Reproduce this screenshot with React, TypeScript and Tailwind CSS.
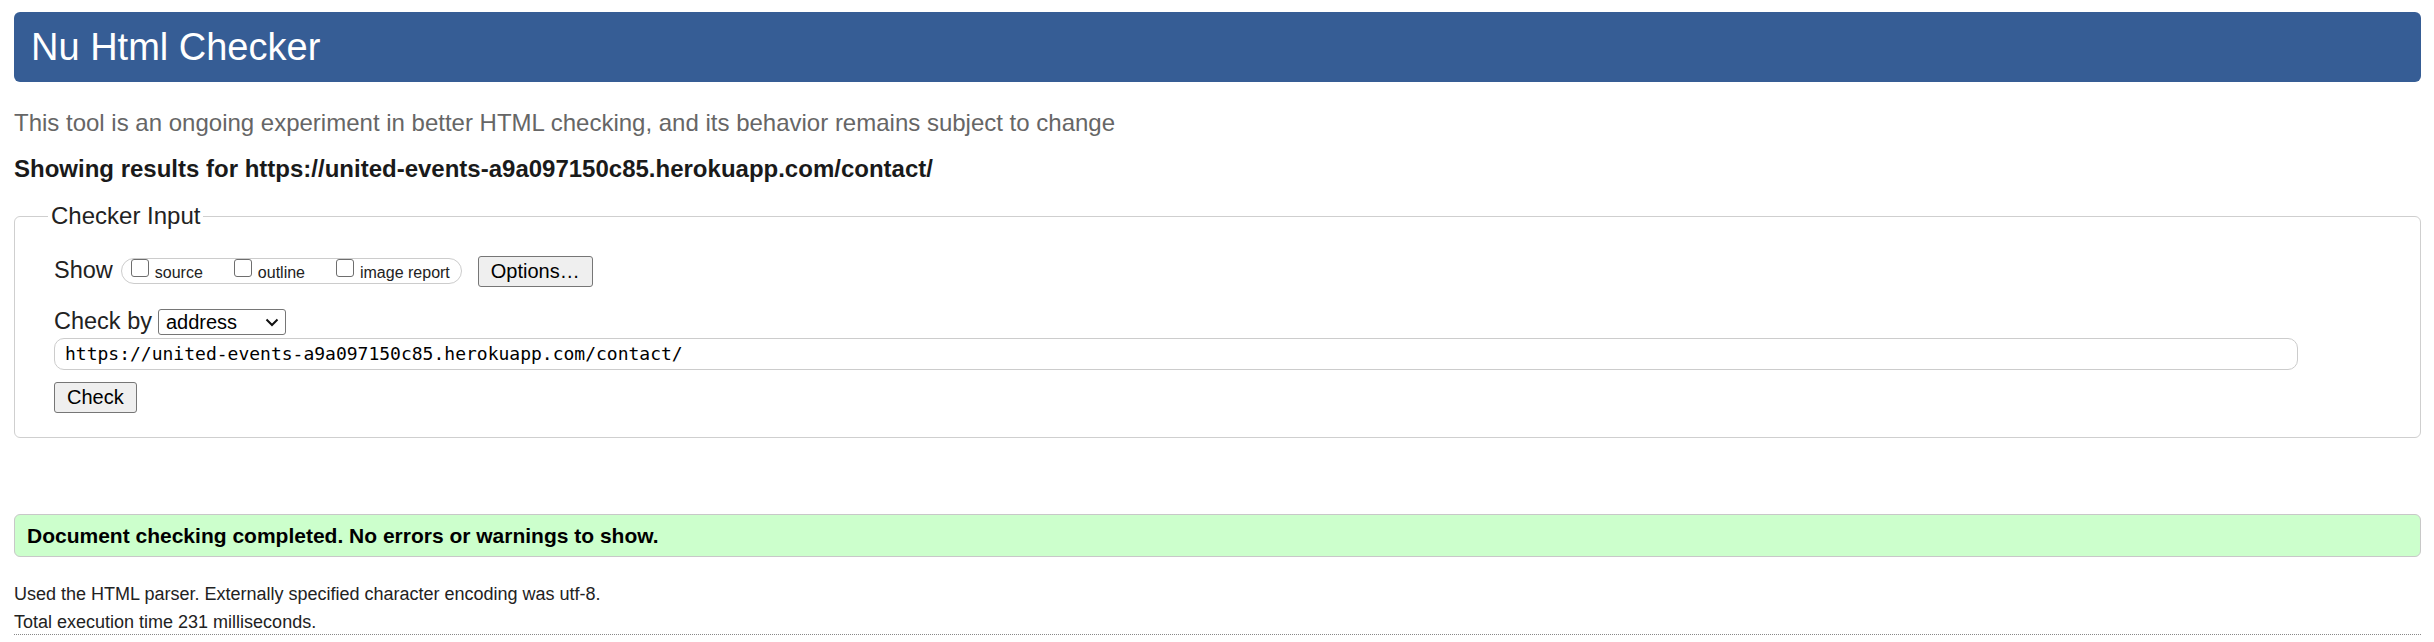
import React from "react";

const sans = { fontFamily: '"Liberation Sans", Arial, sans-serif' };

function Box({ label }: { label: string }) {
  return (
    <div className="flex items-start">
      <span className="block w-[18px] h-[18px] border border-[#6e6e6e] rounded-[3px] bg-white shrink-0" />
      <span className="ml-[6px] mt-[5px] text-[16px] leading-[18px] text-[#222]">{label}</span>
    </div>
  );
}

export default function App() {
  return (
    <div className="bg-white min-h-[642px] pl-[14px] pr-[13px] pt-[12px] text-[#222]" style={sans}>
      <header className="h-[70px] rounded-[6px] bg-[#365d95] flex items-center pl-[17px]">
        <h1 className="text-white text-[38px] leading-none font-normal">Nu Html Checker</h1>
      </header>

      <p className="mt-[27px] text-[24px] leading-[28px] text-[#666]">
        This tool is an ongoing experiment in better HTML checking, and its behavior remains subject to change
      </p>

      <p className="mt-[18px] text-[24px] leading-[28px] font-bold text-[#1a1a1a]">
        Showing results for https://united-events-a9a097150c85.herokuapp.com/contact/
      </p>

      <fieldset className="mt-[19px] border border-[#cfcfcf] rounded-[6px] pl-[33px] pr-[16px] pb-[24px]">
        <legend className="px-[3px] text-[24px] leading-[28px] text-[#222]">Checker Input</legend>

        <div className="ml-[6px] mt-[26px] flex items-start">
          <span className="text-[23.5px] leading-[28px]">Show</span>
          <div className="ml-[8px] mt-[2px] h-[26px] border border-[#cccccc] rounded-full flex items-start pl-[9px] pr-[11px]">
            <Box label="source" />
            <div className="ml-[31px]">
              <Box label="outline" />
            </div>
            <div className="ml-[31px]">
              <Box label="image report" />
            </div>
          </div>
          <button className="ml-[16px] h-[31px] px-[12px] border border-[#767676] rounded-[3px] bg-[#efefef] text-[20px] leading-[23px] text-black">
            Options…
          </button>
        </div>

        <div className="ml-[6px] mt-[20px] flex items-start">
          <span className="text-[23.5px] leading-[28px]">Check by</span>
          <div className="ml-[6px] mt-[2px] w-[128px] h-[26px] border border-[#767676] rounded-[3px] bg-white flex items-center pl-[7px] pr-[6px] justify-between">
            <span className="text-[20px] leading-[24px] text-black">address</span>
            <svg width="14" height="9" viewBox="0 0 14 9" fill="none">
              <path d="M1.5 1.5 L7 7 L12.5 1.5" stroke="#111" strokeWidth="2" />
            </svg>
          </div>
        </div>

        <div className="ml-[6px] mr-[106px] mt-[3px] h-[32px] border border-[#cccccc] rounded-[10px] flex items-center pl-[10px]">
          <span
            className="text-[18px] leading-[22px] text-black"
            style={{ fontFamily: '"DejaVu Sans Mono", "Liberation Mono", monospace' }}
          >
            https://united-events-a9a097150c85.herokuapp.com/contact/
          </span>
        </div>

        <div className="ml-[6px] mt-[12px]">
          <button className="h-[31px] px-[12px] border border-[#767676] rounded-[3px] bg-[#efefef] text-[20px] leading-[23px] text-black">
            Check
          </button>
        </div>
      </fieldset>

      <div className="mt-[76px] h-[43px] border border-[#c8c8c8] rounded-[6px] bg-[#ccffcc] flex items-center pl-[12px]">
        <span className="text-[21px] font-bold text-black">Document checking completed. No errors or warnings to show.</span>
      </div>

      <p className="mt-[25px] text-[18px] leading-[24px] text-[#222]">
        Used the HTML parser. Externally specified character encoding was utf-8.
      </p>
      <p className="mt-[4px] text-[18px] leading-[24px] text-[#222]">Total execution time 231 milliseconds.</p>
      <div className="border-t border-dotted border-[#888]" />
    </div>
  );
}
